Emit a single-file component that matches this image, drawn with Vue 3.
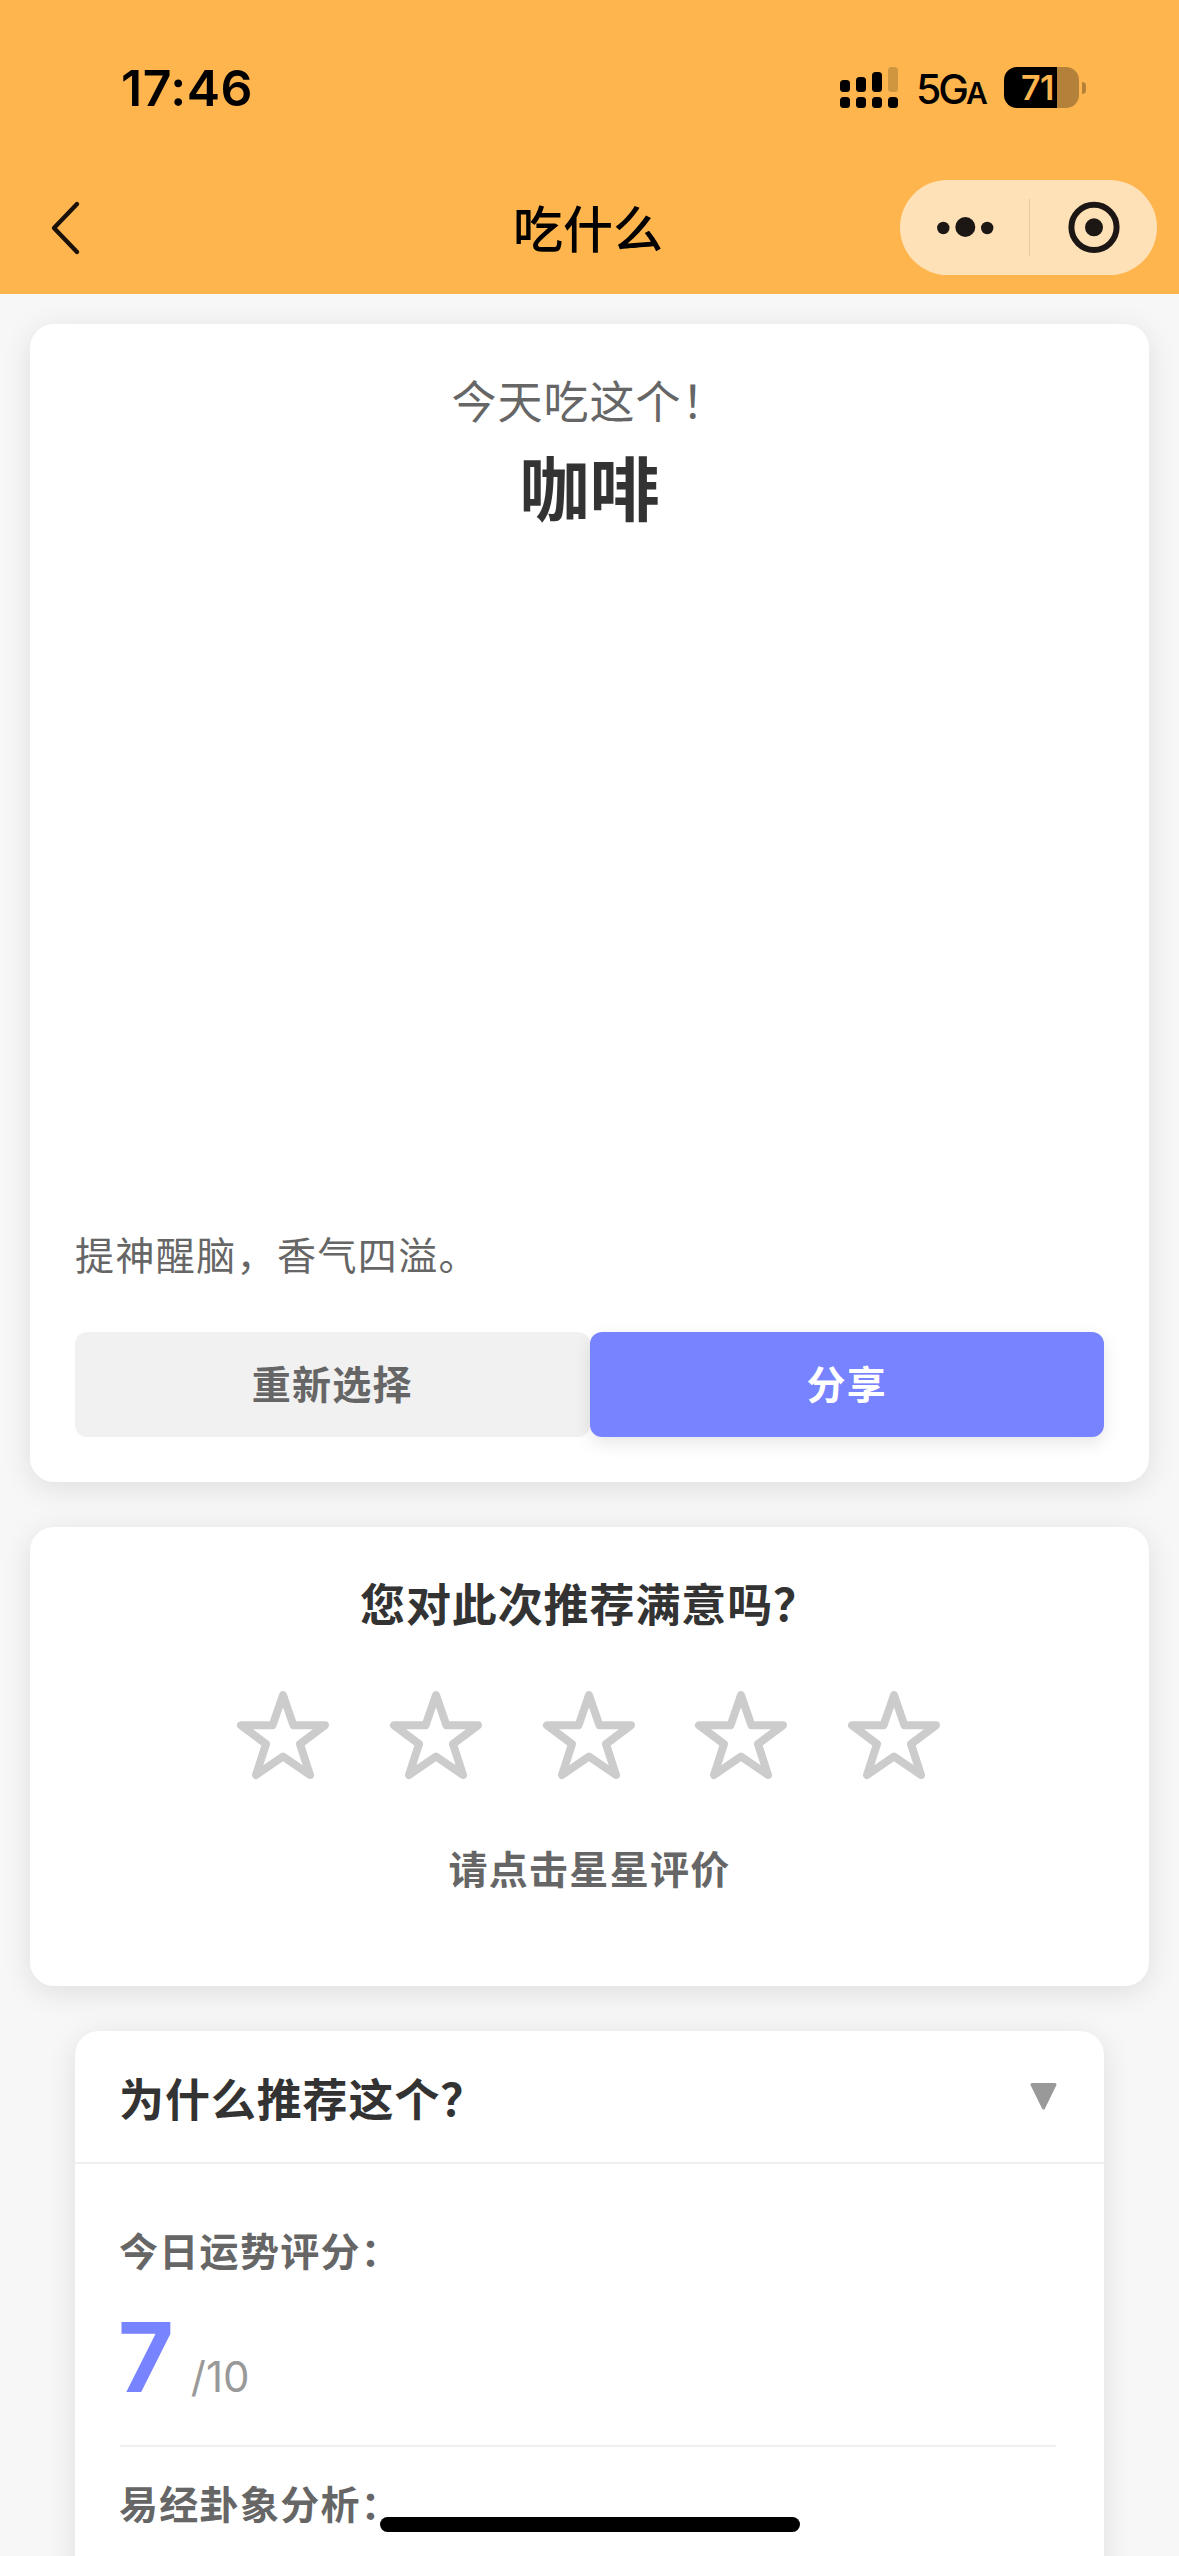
<script setup>
const signalBars = [
  { x: 0, y: 13, h: 12 },
  { x: 16, y: 10, h: 15 },
  { x: 32, y: 5, h: 20 },
]
const stars = [1, 2, 3, 4, 5]
</script>

<template>
  <div class="screen">
    <header class="top">
      <div class="status">
        <span class="time">17:46</span>
        <div class="status-right">
          <svg class="signal" width="58" height="41" viewBox="0 0 58 41">
            <rect v-for="b in signalBars" :key="b.x" :x="b.x" :y="b.y" width="10" :height="b.h" rx="3.5" />
            <rect x="48" y="0" width="10" height="25" rx="3.5" fill="#cf963f" />
            <rect v-for="n in 4" :key="n" :x="(n - 1) * 16" y="30" width="10" height="11" rx="3.5" />
          </svg>
          <span class="network">5G<small>A</small></span>
          <div class="battery">
            <div class="cell"><span class="level">71</span></div>
            <div class="nub"></div>
          </div>
        </div>
      </div>
      <div class="nav">
        <svg class="back" width="34" height="56" viewBox="0 0 34 56">
          <path d="M29 4 L6 28 L29 52" fill="none" stroke="#1a1208" stroke-width="4.4" stroke-linecap="round" stroke-linejoin="round" />
        </svg>
        <h1 class="nav-title">吃什么</h1>
        <div class="capsule">
          <svg width="257" height="95" viewBox="0 0 257 95">
            <g fill="#1c1715">
              <circle cx="43.3" cy="48" r="6.2" />
              <circle cx="65.3" cy="47" r="10" />
              <circle cx="87.2" cy="48" r="6.2" />
              <circle cx="194" cy="47.3" r="9" />
            </g>
            <path d="M129.5 19V76" stroke="#ecca9c" stroke-width="1.2" />
            <circle cx="194" cy="47.3" r="22.6" fill="none" stroke="#1c1715" stroke-width="6" />
          </svg>
        </div>
      </div>
    </header>

    <main>
      <section class="card result">
        <p class="lead">今天吃这个！</p>
        <h2 class="dish">咖啡</h2>
        <div class="photo"></div>
        <p class="desc">提神醒脑，香气四溢。</p>
        <div class="actions">
          <button class="btn">重新选择</button>
          <button class="btn primary">分享</button>
        </div>
      </section>

      <section class="card rating">
        <h3 class="rating-title">您对此次推荐满意吗？</h3>
        <div class="stars">
          <svg v-for="s in stars" :key="s" width="94" height="90" viewBox="0 0 94 90">
            <path
              d="M47 5 L57.4 35.2 H89 L64 54 L74 85 L47 66.5 L20 85 L30 54 L5 35.2 H36.6 Z"
              fill="none" stroke="#ccc" stroke-width="8" stroke-linejoin="round"
            />
          </svg>
        </div>
        <p class="hint">请点击星星评价</p>
      </section>

      <section class="card reason">
        <div class="reason-head">
          <h3>为什么推荐这个？</h3>
          <svg width="27" height="27" viewBox="0 0 27 27">
            <path d="M2 1.5 H25 L13.5 25 Z" fill="#999" stroke="#999" stroke-width="3" stroke-linejoin="round" />
          </svg>
        </div>
        <div class="reason-body">
          <div class="block">
            <p class="label">今日运势评分：</p>
            <p class="score"><b>7</b><span>/10</span></p>
          </div>
          <div class="block second">
            <p class="label">易经卦象分析：</p>
          </div>
        </div>
      </section>
    </main>
    <div class="home-bar"></div>
  </div>
</template>

<style>
body {
  background: #f7f7f8;
}
</style>

<style scoped>
.screen {
  position: relative;
  width: 1179px;
  height: 2556px;
  overflow: hidden;
  background: #f7f7f8;
  font-family: "Noto Sans CJK SC", sans-serif;
}
h1, h2, h3, p {
  margin: 0;
}
.top {
  height: 294px;
  background: #ffb54d;
  box-sizing: border-box;
}
.status {
  display: flex;
  justify-content: space-between;
  align-items: center;
  height: 175px;
  padding: 0 93px 0 121px;
  font-family: Inter, sans-serif;
  color: #000;
}
.time {
  font-size: 50px;
  font-weight: 600;
  letter-spacing: 0.5px;
}
.status-right {
  display: flex;
  align-items: center;
}
.network {
  margin-left: 18px;
  padding-top: 7px;
  width: 69px;
  font-size: 41px;
  line-height: 41px;
  font-weight: 500;
  letter-spacing: -3px;
  white-space: nowrap;
}
.network small {
  font-size: 30px;
  font-weight: 600;
}
.battery {
  display: flex;
  align-items: center;
  gap: 3px;
  margin-left: 19px;
}
.cell {
  width: 75px;
  height: 41px;
  border-radius: 13px;
  background: linear-gradient(90deg, #000 53px, #b3813a 53px);
}
.level {
  display: block;
  padding-left: 17px;
  font-size: 34px;
  line-height: 41px;
  font-weight: 600;
  letter-spacing: -0.5px;
  color: #ffb54d;
}
.nub {
  width: 4px;
  height: 12px;
  border-radius: 0 4px 4px 0;
  background: #b3813a;
}
.nav {
  display: grid;
  grid-template-columns: 257px 1fr 257px;
  align-items: center;
  height: 105px;
  padding: 0 22px;
}
.back {
  margin-left: 26px;
}
.nav-title {
  padding: 0 3px 4px 0;
  text-align: center;
  font-size: 50px;
  line-height: 60px;
  font-weight: 500;
  color: #000;
}
.capsule {
  height: 95px;
  border-radius: 48px;
  background: #ffe1b8;
}
main {
  padding: 30px 30px 0;
}
.card {
  box-sizing: border-box;
  background: #fff;
  border-radius: 24px;
  box-shadow: 0 6px 30px rgba(0, 0, 0, 0.1);
}
.result {
  padding: 46px 45px 45px;
}
.lead {
  text-align: center;
  font-size: 45px;
  line-height: 60px;
  letter-spacing: 1px;
  color: #666;
}
.dish {
  margin-top: 6px;
  text-align: center;
  font-size: 70px;
  line-height: 100px;
  font-weight: 700;
  color: #333;
}
.photo {
  height: 687px;
}
.desc {
  font-size: 39px;
  line-height: 60px;
  letter-spacing: 1.4px;
  color: #666;
}
.actions {
  display: flex;
  margin-top: 49px;
}
.btn {
  flex: 1;
  height: 105px;
  padding: 0 0 6px;
  border: 0;
  border-radius: 12px;
  background: #f1f1f1;
  font: 700 39px/60px "Noto Sans CJK SC", sans-serif;
  letter-spacing: 1.3px;
  color: #666;
}
.primary {
  background: #7883ff;
  color: #fff;
  box-shadow: 0 6px 18px rgba(0, 0, 0, 0.1);
}
.rating {
  height: 459px;
  margin-top: 45px;
  padding-top: 46px;
  text-align: center;
}
.rating-title,
.reason-head h3 {
  font-size: 45px;
  line-height: 60px;
  font-weight: 700;
  letter-spacing: 0.9px;
  color: #333;
}
.stars {
  display: flex;
  justify-content: center;
  gap: 58.8px;
  margin-top: 57px;
  padding-right: 2px;
}
.hint,
.label {
  font-size: 39px;
  line-height: 60px;
  font-weight: 700;
  letter-spacing: 1.3px;
  color: #666;
}
.hint {
  margin-top: 57px;
}
.reason {
  height: 600px;
  margin: 45px 45px 0;
}
.reason-head {
  display: flex;
  align-items: center;
  justify-content: space-between;
  box-sizing: border-box;
  height: 133px;
  padding: 0 47px 0 44px;
  border-bottom: 2px solid #f0f0f0;
}
.reason-head h3 {
  padding-top: 3px;
}
.reason-body {
  padding: 55px 48px 0 45px;
}
.block {
  padding-bottom: 40px;
  border-bottom: 2px solid #f0f0f0;
}
.second {
  padding-top: 25px;
  border: 0;
}
.label {
  text-indent: -1px;
}
.score {
  display: flex;
  align-items: baseline;
  gap: 17px;
  height: 96px;
  margin-top: 30px;
  font-family: Inter, sans-serif;
  line-height: 96px;
}
.score b {
  margin-left: -2px;
  font-size: 96px;
  font-weight: 700;
  color: #7883ff;
}
.score span {
  font-size: 42px;
  line-height: 1;
  color: #999;
}
.home-bar {
  position: absolute;
  left: 380px;
  bottom: 24px;
  width: 420px;
  height: 15px;
  border-radius: 8px;
  background: #000;
}
</style>
